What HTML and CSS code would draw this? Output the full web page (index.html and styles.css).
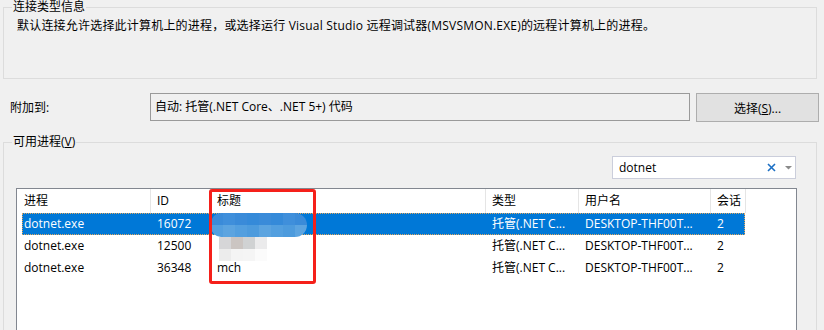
FILE: index.html
```html
<!DOCTYPE html>
<html lang="zh-CN">

<head>
    <meta charset="UTF-8">
    <title>附加到进程</title>
    <link rel="stylesheet" href="styles.css">
</head>

<body>

    <div class="dialog">

        <!-- Connection type info -->
        <fieldset class="group info-group">
            <legend>连接类型信息</legend>
            <div class="info-text">默认连接允许选择此计算机上的进程，或选择运行 Visual Studio 远程调试器(MSVSMON.EXE)的远程计算机上的进程。</div>
        </fieldset>

        <!-- Attach to -->
        <div class="attach-row">
            <div class="attach-label">附加到:</div>
            <div class="attach-box">自动: 托管(.NET Core、.NET 5+) 代码</div>
            <button class="select-btn">选择(<u>S</u>)...</button>
        </div>

        <!-- Available processes -->
        <fieldset class="group process-group">
            <legend>可用进程(<u>V</u>)</legend>

            <div class="filter-row">
                <div class="filter-box">
                    <span class="filter-text">dotnet</span>
                    <svg class="clear-icon" width="9" height="9" viewBox="0 0 9 9">
                        <path d="M1 1 L8 8 M8 1 L1 8" stroke="#1c6fc4" stroke-width="1.6" fill="none" />
                    </svg>
                    <svg class="drop-icon" width="7" height="4" viewBox="0 0 7 4">
                        <path d="M0 0 L7 0 L3.5 3.5 Z" fill="#8a8a8a" />
                    </svg>
                </div>
            </div>

            <div class="process-list">
                <div class="list-header">
                    <div class="col first">进程</div>
                    <div class="col">ID</div>
                    <div class="col">标题</div>
                    <div class="col">类型</div>
                    <div class="col">用户名</div>
                    <div class="col">会话</div>
                </div>

                <div class="list-row selected">
                    <div class="cell first">dotnet.exe</div>
                    <div class="cell">16072</div>
                    <div class="cell"></div>
                    <div class="cell">托管(.NET C...</div>
                    <div class="cell">DESKTOP-THF00T...</div>
                    <div class="cell">2</div>
                </div>
                <div class="list-row">
                    <div class="cell first">dotnet.exe</div>
                    <div class="cell">12500</div>
                    <div class="cell"></div>
                    <div class="cell">托管(.NET C...</div>
                    <div class="cell">DESKTOP-THF00T...</div>
                    <div class="cell">2</div>
                </div>
                <div class="list-row">
                    <div class="cell first">dotnet.exe</div>
                    <div class="cell">36348</div>
                    <div class="cell">mch</div>
                    <div class="cell">托管(.NET C...</div>
                    <div class="cell">DESKTOP-THF00T...</div>
                    <div class="cell">2</div>
                </div>

                <!-- blurred titles -->
                <div class="blur-pill">
                    <span class="b1"></span><span class="b2"></span><span class="b1"></span><span class="b3"></span>
                    <span class="b1"></span><span class="b3"></span><span class="b2"></span><span class="b1"></span>
                    <span class="l1"></span><span class="l2"></span><span class="l1"></span><span class="l3"></span>
                    <span class="l2"></span><span class="l1"></span><span class="l3"></span><span class="l2"></span>
                </div>
                <div class="blur-grey">
                    <span style="background:#d6d6d8"></span><span style="background:#cbc5c2"></span><span style="background:#d0d2d3"></span><span style="background:#ebebec"></span>
                    <span style="background:#ececec"></span><span style="background:#f4f4f4"></span><span style="background:#f5f5f5"></span><span style="background:#fbfbfb"></span>
                </div>

                <!-- highlight -->
                <div class="red-mark"></div>
            </div>
        </fieldset>

    </div>

</body>

</html>
```

FILE: styles.css
```css
* {
    box-sizing: border-box;
}

body {
    margin: 0;
    background: #f0f0f0;
    font-family: "Open Sans", "Noto Sans CJK SC", sans-serif;
    font-size: 12px;
    color: #000;
}

.dialog {
    height: 330px;
    overflow: hidden;
}

.group {
    margin: 0 7px 0 3px;
    padding: 0;
    border: 1px solid #dcdcdc;
    min-width: 0;
}

.group legend {
    margin-left: 8px;
    padding: 0 1px;
    line-height: 14px;
    height: 14px;
}

.info-text {
    height: 64px;
    padding: 4px 0 0 13px;
    line-height: 16px;
    letter-spacing: 0.2px;
}

.attach-row {
    display: flex;
    align-items: center;
    margin-top: 14px;
    height: 28px;
}

.attach-label {
    width: 150px;
    padding-left: 10px;
}

.attach-box {
    width: 540px;
    height: 28px;
    border: 1px solid #9a9a9a;
    padding: 0 4px;
    line-height: 25px;
}

.select-btn {
    margin-left: 6px;
    width: 123px;
    height: 29px;
    background: #e1e1e1;
    border: 1px solid #adadad;
    font-family: inherit;
    font-size: 12px;
    color: #000;
    padding: 0;
    margin-top: 1px;
}

.process-group {
    margin-top: 14px;
    height: 240px;
}

.filter-row {
    display: flex;
    justify-content: flex-end;
    margin: 7px 20px 0 0;
}

.filter-box {
    width: 184px;
    height: 23px;
    background: #fff;
    border: 1px solid #cbcedb;
    display: flex;
    align-items: center;
    padding-left: 6px;
}

.filter-text {
    flex: 1;
    line-height: 20px;
}

.clear-icon {
    margin-right: 9px;
}

.drop-icon {
    margin-right: 3px;
}

.process-list {
    position: relative;
    margin: 9px 19px 0 12px;
    height: 180px;
    background: #fff;
    border: 1px solid #828790;
}

.list-header {
    display: grid;
    grid-template-columns: 134px 60px 275px 93px 132px 35px;
    height: 24px;
}

.list-header .col {
    border-right: 1px solid #e5e5e5;
    padding-left: 6px;
    line-height: 24px;
}

.list-header .col.first {
    padding-left: 7px;
}

.list-row {
    display: grid;
    grid-template-columns: 129px 60px 275px 93px 132px 34px;
    margin-left: 5px;
    width: 723px;
    height: 22px;
    line-height: 22px;
}

.list-row .cell {
    padding-left: 6px;
    white-space: nowrap;
    overflow: hidden;
}

.list-row .cell.first {
    padding-left: 2px;
}

.list-row.selected {
    background: #0078d7;
    color: #fff;
    outline: 1px dotted #e0a860;
    outline-offset: -1px;
}

.blur-pill {
    position: absolute;
    left: 194px;
    top: 24px;
    width: 96px;
    height: 24px;
    display: grid;
    grid-template-columns: repeat(8, 12px);
    grid-template-rows: 12px 12px;
    border-radius: 10px 12px 12px 10px;
    overflow: hidden;
}

.blur-pill .b1 { background: #3a8bd9; }
.blur-pill .b2 { background: #3f8fdb; }
.blur-pill .b3 { background: #358ad9; }
.blur-pill .l1 { background: #539fdf; }
.blur-pill .l2 { background: #5ca4e0; }
.blur-pill .l3 { background: #4d9bdd; }

.blur-grey {
    position: absolute;
    left: 202px;
    top: 48px;
    display: grid;
    grid-template-columns: repeat(4, 12px);
    grid-template-rows: 12px 12px;
}

.red-mark {
    position: absolute;
    left: 192px;
    top: 0;
    width: 107px;
    height: 95px;
    border: 3px solid #f5201a;
    border-radius: 3px;
}
```
